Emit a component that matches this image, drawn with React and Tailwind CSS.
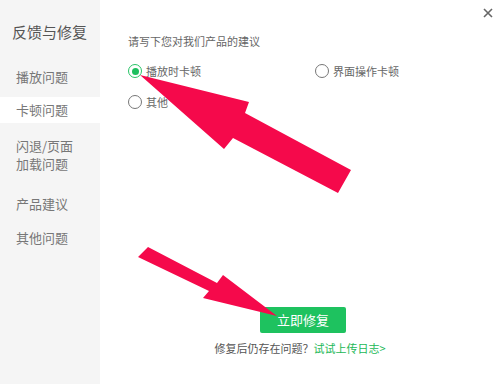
import React from 'react';

const menu = [
  { label: '播放问题', cls: 'h-[26px]' },
  { label: '卡顿问题', cls: 'h-[26px] mt-[7px] bg-white', active: true },
  { label: '闪退/页面\n加载问题', cls: 'mt-[14px] leading-[18px]' },
  { label: '产品建议', cls: 'mt-[22px] leading-[18px]' },
  { label: '其他问题', cls: 'mt-[16px] leading-[18px]' },
];

const Radio = ({ checked, label }) => (
  <div className="flex items-center h-[16px]">
    <span
      className={
        'w-[14px] h-[14px] rounded-full border flex items-center justify-center ' +
        (checked ? 'border-[#27c466] border-[1.5px]' : 'border-[#777] border-[1.5px]')
      }
    >
      {checked && <span className="w-[7px] h-[7px] rounded-full bg-[#1dbf5e]" />}
    </span>
    <span className="ml-[4px] text-[11px] text-[#666]">{label}</span>
  </div>
);

export default function App() {
  return (
    <div
      className="relative w-[500px] h-[384px] flex bg-white overflow-hidden"
      style={{ fontFamily: '"Noto Sans CJK SC", "Noto Sans", sans-serif' }}
    >
      {/* sidebar */}
      <div className="w-[100px] h-full bg-[#f5f5f5] flex flex-col">
        <div className="h-[64px] pl-[12px] pt-[21px] text-[15px] leading-[22px] text-[#555]">反馈与修复</div>
        {menu.map((m, i) => (
          <div
            key={i}
            className={'pl-[16px] flex items-center whitespace-pre-line text-[13px] text-[#777] ' + m.cls}
          >
            {m.label}
          </div>
        ))}
      </div>

      {/* content */}
      <div className="flex-1 flex flex-col pl-[28px] pt-[33px]">
        <div className="text-[11px] leading-[16px] text-[#666]">请写下您对我们产品的建议</div>
        <div className="mt-[14px] grid grid-cols-[187px_1fr] gap-y-[15px]">
          <Radio checked label="播放时卡顿" />
          <Radio label="界面操作卡顿" />
          <Radio label="其他" />
        </div>
        <div className="-ml-[28px] mt-[197px] flex flex-col items-center">
          <button className="w-[86px] h-[26px] rounded-[2px] bg-[#1ec25f] text-white text-[13px] ml-[6px]">
            立即修复
          </button>
          <div className="mt-[7px] text-[11px] leading-[16px] text-[#555]">
            修复后仍存在问题？<span className="text-[#22b857]">试试上传日志&gt;</span>
          </div>
        </div>
      </div>

      {/* close */}
      <svg className="absolute left-[483px] top-[8px]" width="10" height="10" viewBox="0 0 10 10">
        <path d="M1 1L9 9M9 1L1 9" stroke="#666" strokeWidth="1.6" />
      </svg>

      {/* annotation arrows */}
      <svg className="absolute inset-0 pointer-events-none" width="500" height="384" viewBox="0 0 500 384">
        <polygon
          points="140,75 249,102 245,113 351,170 338,193 233,138 224,149"
          fill="#f5094b"
        />
        <polygon
          points="148,247 217,283 223,275 277,316 203,298 209,291 138,257"
          fill="#f5094b"
        />
      </svg>
    </div>
  );
}
